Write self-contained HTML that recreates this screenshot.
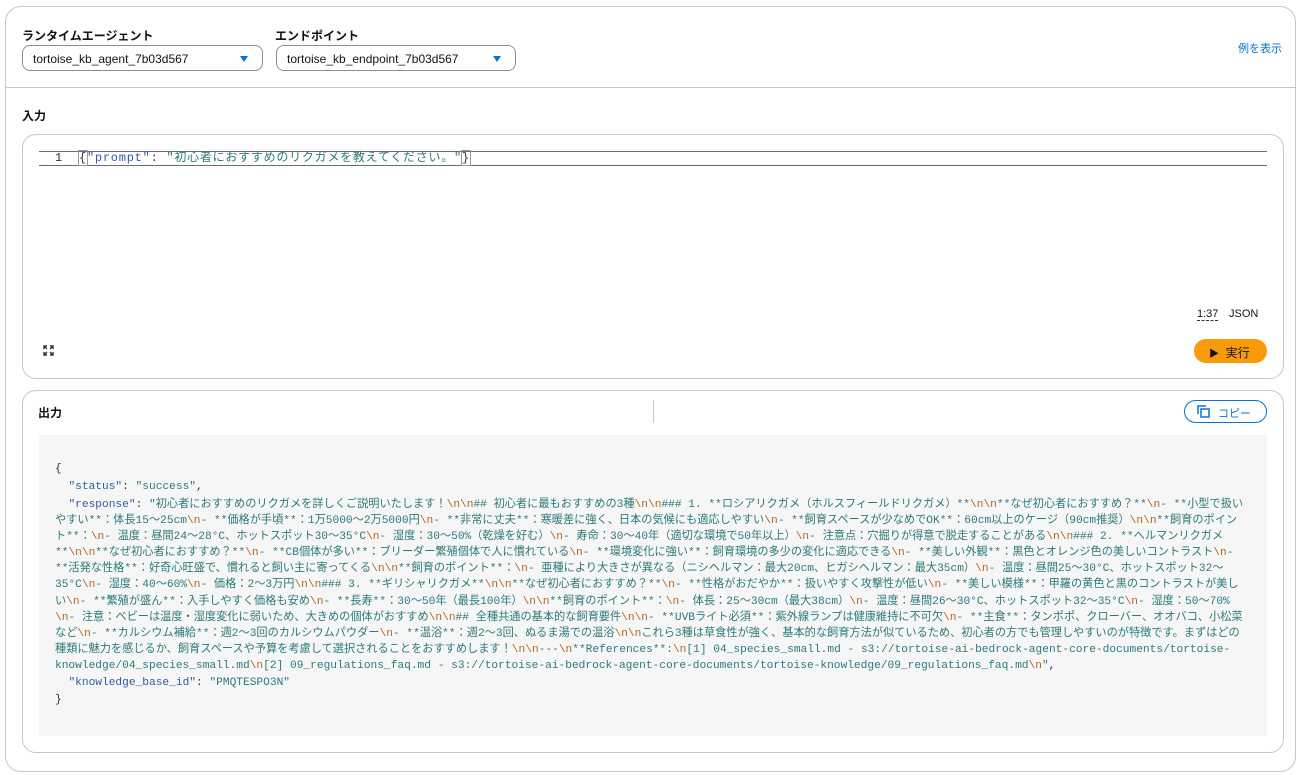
<!DOCTYPE html>
<html><head><meta charset="utf-8"><style>
*{box-sizing:border-box;margin:0;padding:0}
body{width:1306px;height:775px;background:#fff;font-family:"Liberation Sans","Noto Sans CJK JP",sans-serif;color:#0f141a;position:relative;overflow:hidden}
.outer{position:absolute;left:5px;top:6px;width:1291px;height:766px;border:1px solid #c6c6cd;border-radius:16px;background:#fff}
.abs{position:absolute}
.lbl{font-size:12px;font-weight:bold}
.sel{position:absolute;height:26px;border:1px solid #8c8c94;border-radius:8px;font-size:12px;padding:6px 0 0 10px;background:#fff}
.sel:after{content:"";position:absolute;right:14px;top:10px;border-left:4px solid transparent;border-right:4px solid transparent;border-top:6px solid #0972d3}
.box{position:absolute;left:22px;width:1262px;border:1px solid #c6c6cd;border-radius:14px;background:#fff}
.mono{font-family:"Liberation Mono","Noto Sans CJK JP",monospace}
.code{position:absolute;left:39px;top:435px;width:1228px;height:301px;background:#f6f6f6}
.cw{position:absolute;left:16px;top:25px;width:1210px;overflow:hidden}
.cw pre{font-family:"Liberation Mono","Noto Sans CJK JP",monospace;font-size:11.2px;color:#2b7a78;white-space:pre;overflow:hidden}
.k{color:#2e5ca8}.p{color:#333}
b{font-weight:normal;color:#b5651d}
</style></head><body>
<div class="outer"></div>
<div class="abs lbl" style="left:22px;top:27px">ランタイムエージェント</div>
<div class="abs lbl" style="left:275px;top:27px">エンドポイント</div>
<div class="sel" style="left:22px;top:45px;width:241px">tortoise_kb_agent_7b03d567</div>
<div class="sel" style="left:276px;top:45px;width:240px">tortoise_kb_endpoint_7b03d567</div>
<div class="abs" style="left:1238px;top:40px;font-size:11px;color:#0972d3">例を表示</div>
<div class="abs" style="left:5px;top:87px;width:1291px;height:1px;background:#c6c6cd"></div>
<div class="abs lbl" style="left:22px;top:107px">入力</div>
<div class="box" style="top:134px;height:245px"></div>
<div class="abs" style="left:39px;top:151px;width:1228px;height:15px;border-top:1px solid #6b6b78;border-bottom:1px solid #6b6b78"></div>
<div class="abs mono" style="left:55px;top:150px;font-size:12px;color:#333;line-height:16px">1</div>
<div class="abs mono" style="left:79px;top:150px;font-size:12px;line-height:16px;white-space:pre;color:#2b7a78;letter-spacing:0.75px"><span class="p" style="outline:1px solid #999">{</span><span class="k">"prompt"</span><span class="p">: </span>"初心者におすすめのリクガメを教えてください。"<span class="p" style="outline:1px solid #999">}</span></div>
<div class="abs" style="left:1197px;top:308px;font-size:11px;border-bottom:1px dashed #333">1:37</div>
<div class="abs" style="left:1229px;top:308px;font-size:11px">JSON</div>
<svg class="abs" style="left:43px;top:345px" width="11" height="11" viewBox="0 0 11 11" fill="none" stroke="#333" stroke-width="1.4"><path d="M1 4V1h3M7 1h3v3M10 7v3H7M4 10H1V7M1 1l3 3M10 1L7 4M10 10L7 7M1 10l3-3"/></svg>
<div class="abs" style="left:1194px;top:339px;width:73px;height:24px;border-radius:12px;background:#f89a0a;font-size:12px;padding:5px 0 0 15px"><span style="font-size:10px">▶</span>&nbsp; 実行</div>
<div class="box" style="top:390px;height:363px"></div>
<div class="abs lbl" style="left:38px;top:404px">出力</div>
<div class="abs" style="left:653px;top:400px;width:1px;height:23px;background:#c6c6cd"></div>
<div class="abs" style="left:1184px;top:400px;width:83px;height:23px;border:1px solid #0972d3;border-radius:12px;color:#0972d3;font-size:11px;padding:4px 0 0 33px">コピー</div>
<svg class="abs" style="left:1197px;top:405px" width="13" height="13" viewBox="0 0 13 13" fill="none" stroke="#0972d3" stroke-width="1.5"><path d="M1 9V1h8"/><rect x="4" y="4" width="8" height="8"/></svg>
<div class="code"><div class="cw">
<pre style="line-height:18px"><span class="p">{</span>
  <span class="k">"status"</span><span class="p">: </span>"success"<span class="p">,</span></pre>
<pre style="line-height:16.1px;margin-top:1px">  <span class="k">"response"</span><span class="p">: </span>"初心者におすすめのリクガメを詳しくご説明いたします！<b>\n\n</b>## 初心者に最もおすすめの3種<b>\n\n</b>### 1. **ロシアリクガメ（ホルスフィールドリクガメ）**<b>\n\n</b>**なぜ初心者におすすめ？**<b>\n</b>- **小型で扱い
やすい**：体長15～25cm<b>\n</b>- **価格が手頃**：1万5000～2万5000円<b>\n</b>- **非常に丈夫**：寒暖差に強く、日本の気候にも適応しやすい<b>\n</b>- **飼育スペースが少なめでOK**：60cm以上のケージ（90cm推奨）<b>\n\n</b>**飼育のポイン
ト**：<b>\n</b>- 温度：昼間24～28°C、ホットスポット30～35°C<b>\n</b>- 湿度：30～50%（乾燥を好む）<b>\n</b>- 寿命：30～40年（適切な環境で50年以上）<b>\n</b>- 注意点：穴掘りが得意で脱走することがある<b>\n\n</b>### 2. **ヘルマンリクガメ
**<b>\n\n</b>**なぜ初心者におすすめ？**<b>\n</b>- **CB個体が多い**：ブリーダー繁殖個体で人に慣れている<b>\n</b>- **環境変化に強い**：飼育環境の多少の変化に適応できる<b>\n</b>- **美しい外観**：黒色とオレンジ色の美しいコントラスト<b>\n</b>-
**活発な性格**：好奇心旺盛で、慣れると飼い主に寄ってくる<b>\n\n</b>**飼育のポイント**：<b>\n</b>- 亜種により大きさが異なる（ニシヘルマン：最大20cm、ヒガシヘルマン：最大35cm）<b>\n</b>- 温度：昼間25～30°C、ホットスポット32～
35°C<b>\n</b>- 湿度：40～60%<b>\n</b>- 価格：2～3万円<b>\n\n</b>### 3. **ギリシャリクガメ**<b>\n\n</b>**なぜ初心者におすすめ？**<b>\n</b>- **性格がおだやか**：扱いやすく攻撃性が低い<b>\n</b>- **美しい模様**：甲羅の黄色と黒のコントラストが美し
い<b>\n</b>- **繁殖が盛ん**：入手しやすく価格も安め<b>\n</b>- **長寿**：30～50年（最長100年）<b>\n\n</b>**飼育のポイント**：<b>\n</b>- 体長：25～30cm（最大38cm）<b>\n</b>- 温度：昼間26～30°C、ホットスポット32～35°C<b>\n</b>- 湿度：50～70%
<b>\n</b>- 注意：ベビーは温度・湿度変化に弱いため、大きめの個体がおすすめ<b>\n\n</b>## 全種共通の基本的な飼育要件<b>\n\n</b>- **UVBライト必須**：紫外線ランプは健康維持に不可欠<b>\n</b>- **主食**：タンポポ、クローバー、オオバコ、小松菜
など<b>\n</b>- **カルシウム補給**：週2～3回のカルシウムパウダー<b>\n</b>- **温浴**：週2～3回、ぬるま湯での温浴<b>\n\n</b>これら3種は草食性が強く、基本的な飼育方法が似ているため、初心者の方でも管理しやすいのが特徴です。まずはどの
種類に魅力を感じるか、飼育スペースや予算を考慮して選択されることをおすすめします！<b>\n\n</b>---<b>\n</b>**References**:<b>\n</b>[1] 04_species_small.md - s3://tortoise-ai-bedrock-agent-core-documents/tortoise-
knowledge/04_species_small.md<b>\n</b>[2] 09_regulations_faq.md - s3://tortoise-ai-bedrock-agent-core-documents/tortoise-knowledge/09_regulations_faq.md<b>\n</b>"<span class="p">,</span></pre>
<pre style="line-height:17px;margin-top:0.5px">  <span class="k">"knowledge_base_id"</span><span class="p">: </span>"PMQTESPO3N"
<span class="p">}</span></pre>
</div></div>
</body></html>
